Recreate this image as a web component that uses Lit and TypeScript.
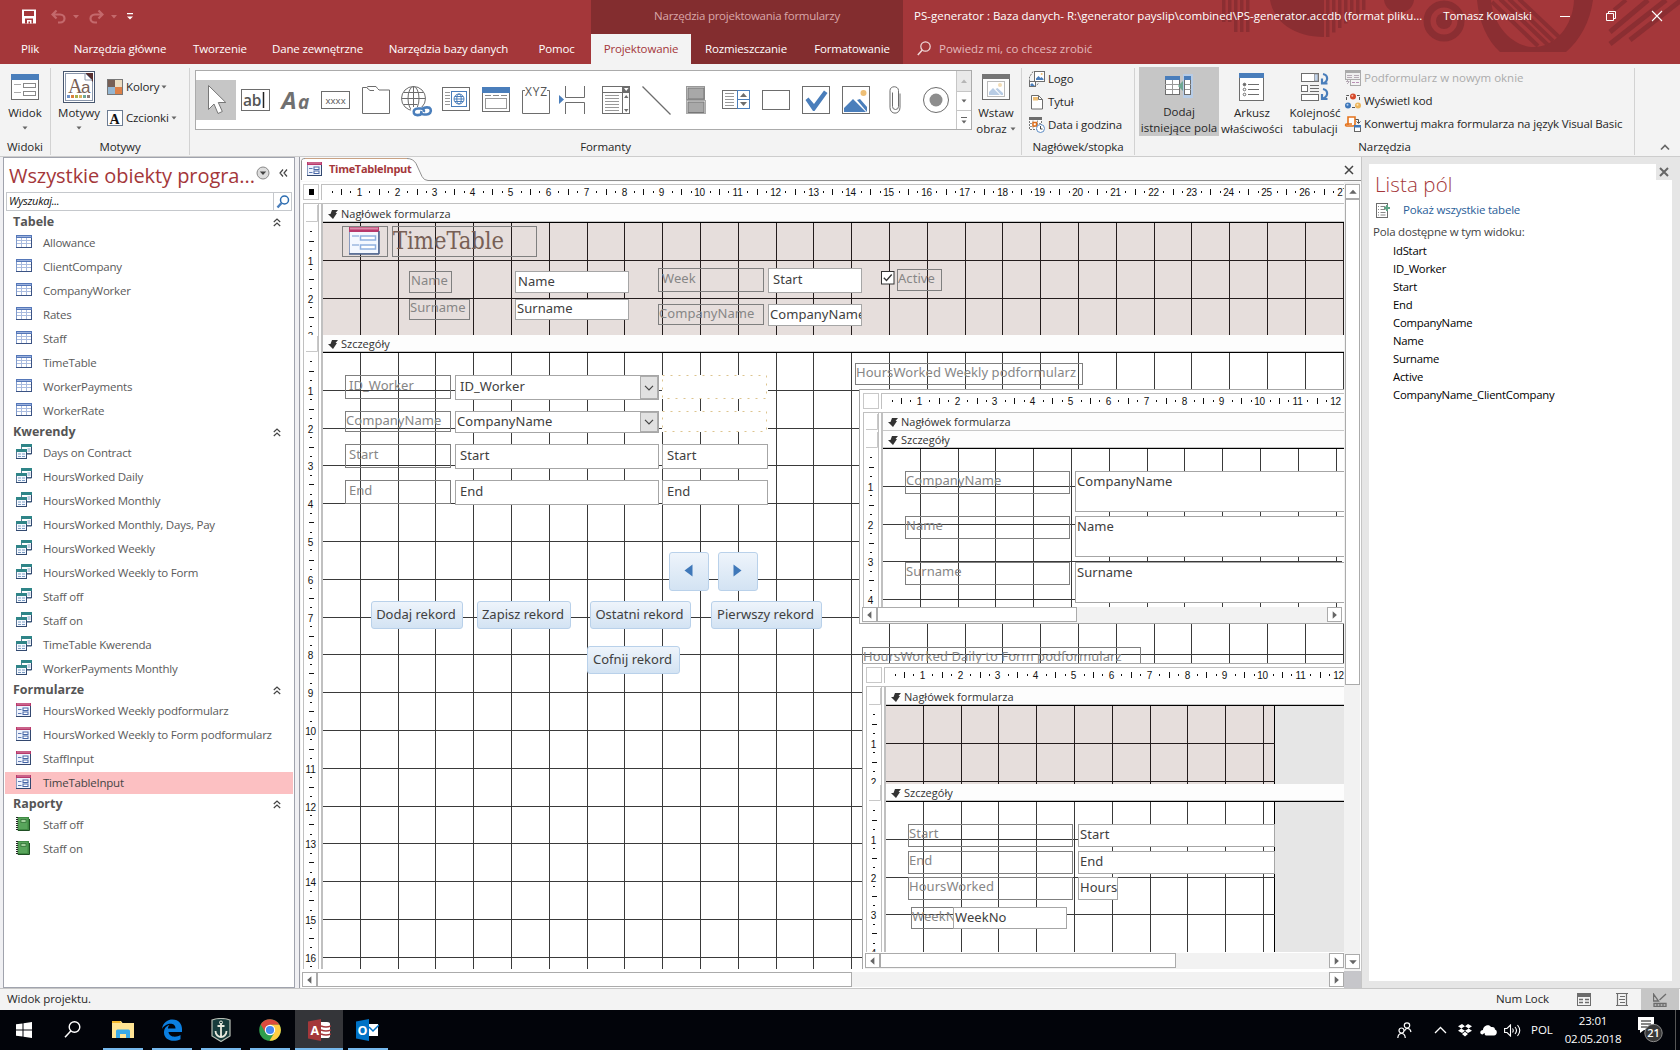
import { LitElement, html, svg, css, nothing } from "lit";
import { customElement } from "lit/decorators.js";

const CM = 37.8;
const B = "#4a7ebb";
const G = "#6d6d6d";

type Frag = unknown;

const icon = (w: number, h: number, body: Frag) =>
  html`<svg class="ic" width=${w} height=${h} viewBox="0 0 ${w} ${h}">${body}</svg>`;

/* ---------- rulers, grids and sections of a form designer ---------- */

const hRuler = (w: number) => {
  const out: Frag[] = [];
  for (let k = 1; k * (CM / 4) < w; k++) {
    const x = Math.floor(0.6 + (k * CM) / 4);
    if (k % 4 === 0) out.push(svg`<text x=${x - 0.5} y="11" text-anchor="middle">${k / 4}</text>`);
    else if (k % 2 === 0) out.push(svg`<rect x=${x} y="4" width="1" height="6"/>`);
    else out.push(svg`<rect x=${x} y="6" width="1" height="2"/>`);
  }
  return html`<svg class="ruler" width=${w} height="16">${out}</svg>`;
};

const vRuler = (bar: number, h: number) => {
  const out: Frag[] = [
    svg`<path d="M13.5 1V${bar - 1.5}H2" fill="none" stroke="#c8c8c8"/>`,
  ];
  for (let k = 1; k * (CM / 4) < h + 4; k++) {
    const y = Math.floor(bar - 0.5 + (k * CM) / 4);
    if (k % 4 === 0) out.push(svg`<text x="6.5" y=${y + 5} text-anchor="middle">${k / 4}</text>`);
    else if (k % 2 === 0) out.push(svg`<rect x="5" y=${y} width="5" height="1"/>`);
    else out.push(svg`<rect x="6" y=${y} width="2" height="1"/>`);
  }
  return html`<svg class="ruler vr" width="16" height=${bar + h}>${out}</svg>`;
};

const grid = (w: number, h: number, color: string) => {
  const out: Frag[] = [];
  for (let x = CM - 0.5; x < w; x += CM) out.push(svg`<rect x=${Math.floor(x)} y="0" width="1" height=${h}/>`);
  for (let y = CM - 0.5; y < h; y += CM) out.push(svg`<rect x="0" y=${Math.floor(y)} width=${w} height="1"/>`);
  return html`<svg class="gridlines" width=${w} height=${h} fill=${color}>${out}</svg>`;
};

interface SectionSpec {
  title: string;
  bar: number;
  h: number;
  pink?: boolean;
  gridW?: number;
  content?: Frag;
}

const section = (s: SectionSpec, w: number) => html`
  <div class="section">
    ${vRuler(s.bar, s.h)}
    <div class="secmain">
      <div class="bar ${s.h ? "" : "flat"}" style="height:${s.bar}px">
        <svg width="10" height="10" viewBox="0 0 10 10"><path d="M4 1h6L7.500 4H9L5 10 0 5h2.500z" fill="#333"/></svg>
        ${s.title}
      </div>
      ${s.h
        ? html`<div class="canvas ${s.gridW ? "short" : ""}" style="height:${s.h}px">
            <div class="paper ${s.pink ? "pink" : ""}" style="width:${s.gridW ?? w}px">
              ${grid(s.gridW ?? w, s.h, s.pink ? "#231c1c" : "#3a3a3a")}
            </div>
            ${s.content ?? nothing}
          </div>`
        : nothing}
    </div>
  </div>`;

const designer = (w: number, secs: SectionSpec[], main = false) => html`
  <div class="designer">
    <div class="rulerrow">
      <div class="corner">${main ? html`<i></i>` : nothing}</div>
      <div class="hr">${hRuler(w)}</div>
    </div>
    <div class="secs">${secs.map((s) => section(s, w))}</div>
  </div>`;

const arrowBtn = (dir: string) => {
  const d: Record<string, string> = {
    l: "M9.500 4v8L5 8z",
    r: "M5.500 4v8L10 8z",
    u: "M4 10h8L8 5.500z",
    d: "M4 6h8L8 10.500z",
  };
  return html`<div class="sbtn"><svg width="14" height="14" viewBox="0.500 0.500 15 15"><path d=${d[dir]} fill="#666"/></svg></div>`;
};

const hScroll = (thumb: number) => html`
  <div class="hscroll">${arrowBtn("l")}<div class="thumb" style="width:${thumb}px"></div><div class="grow"></div>${arrowBtn("r")}</div>`;

/* Controls on a canvas; the frame is measured in window coordinates. */
const placer = (ox: number, oy: number) => {
  const at = (x: number, y: number, r: number, b: number) =>
    `left:${x - ox}px;top:${y - oy}px;width:${r - x}px;height:${b - y}px`;
  return {
    at,
    label: (t: string, x: number, y: number, r: number, b: number, px = 1, cy = 9.5) =>
      html`<div class="ctl lab" style="${at(x, y, r, b)};padding-left:${px}px;line-height:${cy * 2 - 2}px">${t}</div>`,
    field: (t: string, x: number, y: number, r: number, b: number, px = 2, cy = 10.5) =>
      html`<div class="ctl fld" style="${at(x, y, r, b)};padding-left:${px}px;line-height:${cy * 2 - 2}px">${t}</div>`,
    combo: (t: string, x: number, y: number, r: number, b: number, px = 2, cy = 10.5) =>
      html`<div class="ctl fld combo" style="${at(x, y, r, b)};padding-left:${px}px;line-height:${cy * 2 - 2}px">
        ${t}<span class="drop"><svg width="10" height="6" viewBox="0 0 10 6"><path d="M1 0.800l4 4 4-4" fill="none" stroke="#444" stroke-width="1.200"/></svg></span>
      </div>`,
    button: (t: Frag, x: number, y: number, r: number, b: number) =>
      html`<div class="cmd" style=${at(x, y, r, b)}>${t}</div>`,
  };
};

/* ---------- navigation icons ---------- */

const tableIcon = icon(16, 14, svg`
  <rect x="0.500" y="0.500" width="15" height="12" fill="#fff" stroke="#7f9acb"/>
  <rect x="0" y="0" width="16" height="3" fill="#5577b8"/><path d="M1 1.500h14" stroke="#9db3de"/>
  <path d="M5.500 3v9M10.500 3v9M1 5.500h14M1 8.500h14" stroke="#a9bbdf"/>
  <path d="M0 12.500h16M15.500 3v10" stroke="#3b5384"/>`);

const queryIcon = icon(16, 15, svg`
  <rect x="5.500" y="0.500" width="10" height="9" fill="#fff" stroke="#5a7f95"/><rect x="5" y="0" width="11" height="3" fill="#2f8588"/>
  <path d="M11.500 5h3M11.500 7h3" stroke="#7b9cc4"/>
  <rect x="0.500" y="5.500" width="10" height="9" fill="#f5f9ff" stroke="#5a7394"/><rect x="0" y="5" width="11" height="3" fill="#2f8588"/>
  <path d="M2 10h3M6 10h3M2 12.500h3M6 12.500h3" stroke="#7b9cc4"/>
  <path d="M0 14.500h11M10.500 8v6M15.500 3v7H11" stroke="#324a70" fill="none"/>`);

const formIcon = (s = 1) => html`<svg class="ic" width=${15 * s} height=${14 * s} viewBox="0 0 15 14">
  <rect x="0.500" y="0.500" width="14" height="13" fill="#eef3fd" stroke="#8a9cc0"/>
  <rect x="0" y="0" width="15" height="3" fill="#b8396b"/><path d="M1 1h13" stroke="#dc8cab"/>
  <path d="M2 6.500h3.500M2 10.500h3.500" stroke="#5f7bb5"/>
  <rect x="7" y="5" width="5" height="2.500" fill="#fff" stroke="#4666a6"/><rect x="7" y="9" width="5" height="2.500" fill="#fff" stroke="#4666a6"/>
  <path d="M0 13.500h15M14.500 3v11" stroke="#33486f"/></svg>`;

const reportIcon = icon(14, 14, svg`
  <rect x="1.500" y="0" width="11.500" height="13.500" fill="#3f8a43"/><rect x="2.500" y="1" width="9" height="11" fill="#58a55b"/>
  <rect x="5" y="2.500" width="5" height="3" fill="#9fd09a" stroke="#2a6a2f" stroke-width="0.700"/>
  <path d="M1 0v14" stroke="#222" stroke-width="2" stroke-dasharray="1 1"/><path d="M2 13.500h11.500V2" stroke="#1f4f24" fill="none"/>`);

const NAV: { title: string; icon: Frag; items: string[] }[] = [
  { title: "Tabele", icon: tableIcon, items: ["Allowance", "ClientCompany", "CompanyWorker", "Rates", "Staff", "TimeTable", "WorkerPayments", "WorkerRate"] },
  { title: "Kwerendy", icon: queryIcon, items: ["Days on Contract", "HoursWorked Daily", "HoursWorked Monthly", "HoursWorked Monthly, Days, Pay", "HoursWorked Weekly", "HoursWorked Weekly to Form", "Staff off", "Staff on", "TimeTable Kwerenda", "WorkerPayments Monthly"] },
  { title: "Formularze", icon: formIcon(), items: ["HoursWorked Weekly podformularz", "HoursWorked Weekly to Form podformularz", "StaffInput", "TimeTableInput"] },
  { title: "Raporty", icon: reportIcon, items: ["Staff off", "Staff on"] },
];

const FIELDS = ["IdStart", "ID_Worker", "Start", "End", "CompanyName", "Name", "Surname", "Active", "CompanyName_ClientCompany"];

/* ---------- gallery icons, drawn in 40×40 cells ---------- */

const box = (x: number, y: number, w: number, h: number, f = "#fff", s = G) =>
  svg`<rect x=${x} y=${y} width=${w} height=${h} fill=${f} stroke=${s}/>`;

const GALLERY: Frag[] = [
  svg`<path d="M12.500 5.500v24l5.500-5.500 4 9.500 4.300-2-4-9h7.500z" fill="#fff" stroke="#777"/>`,
  svg`${box(5.5, 9.5, 28, 21)}<text x="7" y="25.500" font-size="15.500" font-weight="600" fill="#555">ab</text><path d="M27.500 12v16" stroke="#222" stroke-width="1.500"/>`,
  svg`<text x="5.500" y="29" font-size="24" font-style="italic" font-weight="700" fill="#707070">A</text><text x="22" y="29" font-size="19" font-style="italic" font-weight="700" fill="#707070">a</text>`,
  svg`${box(5.5, 11.5, 28, 17)}<text x="9.500" y="23.500" font-size="9.500" fill="#555" textLength="20">xxxx</text>`,
  svg`<path d="M6.500 33.500v-26h4l1.500-1h8l1.500 2 1.500 1.500h10.500v23.500zM10.500 7.500l3.500 3h4" fill="#fff" stroke=${G}/>`,
  svg`<g fill="#fff" stroke=${G}><circle cx="17.500" cy="18.500" r="12"/><ellipse cx="17.500" cy="18.500" rx="5.500" ry="12"/><path d="M17.500 6v25M5.500 18.500h24M7.500 12.500h20M7.500 24.500h14" fill="none"/></g>
    <rect x="15" y="27" width="22" height="9" fill="#fff"/>
    <g fill="none" stroke=${B} stroke-width="2.600"><path d="M26 33.500c-2 2-7 2.300-8 0-1.300-3 1-5 4-5h3c2 0 3.500 1.500 2.800 3.500"/><path d="M26.500 29c2-2 7-2.300 8 0 1.300 3-1 5.500-4 5.500h-2c-2 0-4-1.300-3-3.500"/></g>`,
  svg`${box(6.5, 7.5, 27, 23)}<path d="M9 12.500h5M9 15.500h5M9 18.500h5M9 21.500h5M9 24.500h5" stroke="#999"/>${box(15.5, 11.5, 15, 15, "#fff", B)}
    <g fill="none" stroke=${B}><circle cx="23" cy="19" r="5"/><ellipse cx="23" cy="19" rx="2.200" ry="5"/><path d="M18 19h10M19 16.500h8M19 21.500h8"/></g>`,
  svg`${box(6.5, 9.5, 27, 22)}<rect x="6" y="7" width="28" height="6" fill=${B}/><path d="M9 15.500h6M17 15.500h6M25 15.500h6" stroke="#888"/>${box(9.5, 18.5, 21, 10, "#fff", "#999")}`,
  svg`<path d="M9 10.500H6.500v23h27v-23H31" fill="none" stroke=${G}/><text x="9" y="15.500" font-size="12" font-weight="500" fill="#555" textLength="22">XYZ</text>`,
  svg`<path d="M9.500 6v11.500h19V6M9.500 34V22.500h19V34" fill="none" stroke=${G}/><path d="M3 15l5 4.500-5 4.500z" fill=${B}/>`,
  svg`${box(6.5, 6.5, 27, 27)}<path d="M6 12.500h28" stroke=${G}/><path d="M26.500 6v28" stroke=${G}/><rect x="26" y="6" width="8" height="6" fill=${G}/><path d="M28 8h4.500l-2.300 3z" fill="#fff"/>
    <path d="M9 15.500h14M9 18.500h14M9 21.500h14M9 24.500h14M9 27.500h14M9 30.500h14" stroke="#999"/><path d="M28 18h4.500l-2.300-3zM28 29h4.500l-2.300 3z" fill=${G}/>`,
  svg`<path d="M6.500 6.500l28 28" stroke=${G} stroke-width="1.200"/>`,
  svg`<rect x="10.500" y="6.500" width="18" height="13" fill="#eee" stroke="#999"/><rect x="12" y="8" width="16" height="11" fill="#a8a8a8" stroke="#777"/><rect x="10.500" y="20.500" width="19" height="13" fill="#f0f0f0" stroke="#aaa"/><rect x="12" y="22" width="16" height="10.500" fill="#a8a8a8" stroke="#777"/>`,
  svg`${box(6.5, 10.5, 27, 18)}<path d="M9 13.500h9M9 16.500h9M9 19.500h9M9 22.500h9M9 25.500h9" stroke="#999"/>${box(21.5, 10.5, 12, 18, "#fff", B)}<path d="M21 19.500h13" stroke=${B}/><path d="M24 17h7l-3.500-4zM24 22h7l-3.500 4z" fill=${G}/>`,
  svg`${box(6.5, 10.5, 27, 19)}`,
  svg`${box(6.5, 6.5, 27, 27)}<path d="M9.500 20l3-2.500 5.500 6.500L28 10.500l3.500 2.500L18.500 31h-1.500z" fill=${B}/>`,
  svg`${box(6.5, 6.5, 27, 27)}<path d="M8 32V28l9-9 13 13zM21 20l3-1 7 8v5z" fill=${B}/><circle cx="27.500" cy="13" r="3" fill="#eebf76"/>`,
  svg`<path d="M16.500 12v14a2.500 2.500 0 0 0 6 0V10c0-5-8.500-5-8.500 0v17c0 7.500 10 7.500 10 0V13" transform="translate(0 .5)" fill="none" stroke=${G}/>`,
  svg`<circle cx="20" cy="20" r="12.500" fill="#fff" stroke=${G}/><circle cx="20" cy="20" r="6.500" fill="#8d8d8d"/>`,
];

const caret = html`<svg width="6" height="4" viewBox="0 0 6 4"><path d="M0.500 0.500h5L3 3.500z" fill="#666"/></svg>`;

const logoIcon = icon(16, 16, svg`<path d="M4 0.500L0.500 6v9.500H6L10 12" fill="none" stroke="#777" stroke-dasharray="2 1"/>${box(5.5, 0.5, 10, 10)}<path d="M7 9V7.500L9.500 5l2 2 1-1 2 2v1z" fill=${B}/><circle cx="12.700" cy="3" r="1" fill="#eebf76"/>${box(0.5, 10.5, 6, 5)}<path d="M1.500 15v-1.500L3 12l3 3z" fill=${B}/>`);
const titleIcon = icon(16, 16, svg`<path d="M2.500 1.500h7l4 4v9.500h-11z" fill="#fff" stroke=${G}/><path d="M9.500 1.500v4h4" fill="none" stroke=${G}/><rect x="4" y="3" width="5" height="3.500" fill="#eebf76"/>`);
const dateIcon = icon(16, 16, svg`<rect x="0.500" y="1" width="12" height="11.500" fill="#fff" stroke="#777" stroke-dasharray="2 1"/><rect x="0" y="0" width="13" height="3" fill=${G}/><path d="M4 3.500v9M8.500 3.500v9M1 6.500h11M1 9.500h11" stroke="#999" stroke-dasharray="2 1"/><rect x="4" y="5.500" width="3.500" height="3.500" fill="#fff" stroke="#e0701e" stroke-width="1.500"/><circle cx="11.500" cy="11.500" r="4" fill="#fff" stroke="#5d8cc4"/><path d="M11.500 9v3h2" fill="none" stroke="#444"/>`);
const subIcon = icon(16, 16, svg`<rect x="0.500" y="0.500" width="15" height="9" fill="#eee" stroke="#aaa"/><rect x="0" y="0" width="16" height="3" fill="#aaa"/><path d="M2 5.500h5M9 5.500h5M2 7.500h5M9 7.500h5M1 11.500h3.500M2 10l2 2-2 2" stroke="#b5aab5" fill="none"/><rect x="5.500" y="9.500" width="10" height="6" fill="#f3f3f3" stroke="#aaa"/><path d="M7 12.500h3M11 12.500h3" stroke="#b98fb5"/>`);
const codeIcon = icon(16, 16, svg`<path d="M4 2.500H1.500V8M12 2.500h2.500V8M7 14.500h3" fill="none" stroke="#555" stroke-dasharray="3 1"/><circle cx="8" cy="3.500" r="3" fill="#d6492a"/><circle cx="7.300" cy="2.800" r="1" fill="#f4b9a8"/><circle cx="3" cy="12.500" r="3" fill="#3f78bb"/><circle cx="2.500" cy="11.700" r="1" fill="#b7d2f0"/><circle cx="13" cy="12.500" r="3" fill="#ecb55c"/><circle cx="12.500" cy="11.700" r="1" fill="#fbe6bf"/>`);
const macroIcon = icon(16, 16, svg`<path d="M3 9V1h7v7c0 1.500-1 2-2 2H1.500C0 10 0.500 7.500 2 8h5" fill="#fff" stroke="#e5731c" stroke-width="1.600"/><path d="M10.500 3.500h3V7M11.500 5.500l2 2 2-2" fill="none" stroke="#555"/><rect x="9.500" y="9.500" width="6" height="6" fill="#fff" stroke="#666"/><rect x="9" y="9" width="7" height="2.500" fill="#3f78bb"/>`);

@customElement("app-root")
export class AppRoot extends LitElement {
  static styles = css`
    :host { display: flex; flex-direction: column; width: 1680px; height: 1050px; overflow: hidden; background: #e6e6e6; color: #262626; font-family: "Open Sans", "Noto Sans", sans-serif; font-size: 11.5px; letter-spacing: -0.15px; line-height: 16px; }
    * { box-sizing: border-box; }
    svg { display: block; flex: none; }
    .ic { overflow: visible; }
    .grow { flex: 1; }
    .row { display: flex; align-items: center; }

    /* title bar and tabs */
    .top { position: relative; height: 64px; flex: none; background: #a4373a; color: #fff; display: grid; grid-template-rows: 34px 30px; }
    .art { position: absolute; right: 0; top: 0; }
    .titlebar { position: relative; display: grid; grid-template-columns: 591px 312px 529px 111px 137px; align-items: center; padding-bottom: 2px; }
    .qat { display: flex; align-items: center; height: 32px; padding-left: 22px; padding-top: 1px; }
    .qat svg { margin-right: 7px; }
    .qat .g1 { margin-left: 8px; } .qat .g2 { margin-left: 3px; } .qat .g3 { margin-left: 0; }
    .ctx { background: #832d2f; height: 34px; margin-bottom: -2px; text-align: center; line-height: 32px; color: #d9a7a8; letter-spacing: -0.25px; }
    .doc { padding-left: 11px; white-space: nowrap; letter-spacing: 0; }
    .user { text-align: center; }
    .wbtns { display: flex; align-items: center; padding-left: 15px; gap: 32px; }
    .tabs { position: relative; display: grid; grid-template-columns: 60px 120px 80px 115px 147px 69px 100px 110px 102px 1fr; text-align: center; line-height: 29px; }
    .tabs .c { background: #832d2f; }
    .tabs .on { background: #f3f3f3; color: #a4373a; }
    .tell { display: flex; align-items: center; gap: 8px; padding-left: 14px; color: #e3b9ba; letter-spacing: 0; line-height: 28px; }
    .tell svg { margin-top: -2px; }

    /* ribbon */
    .ribbon { height: 93px; flex: none; background: #f3f3f3; border-bottom: 1px solid #cdcdcd; display: grid; grid-template-columns: 51px 139px 832px 113px 500px 45px; }
    .group { display: flex; flex-direction: column; margin: 4px 0 4px; border-right: 1px solid #d2d2d2; }
    .group.last { border: 0; align-items: center; justify-content: flex-end; padding: 0 0 4px 15px; }
    .gbody { flex: 1; display: flex; padding-top: 1px; min-height: 0; }
    .gname { text-align: center; height: 16px; line-height: 16px; letter-spacing: -0.1px; }
    .big { display: flex; flex-direction: column; align-items: center; text-align: center; white-space: nowrap; height: 70px; font-size: 11.5px; }
    .big .pic { height: 36px; display: flex; align-items: center; justify-content: center; }
    .big .cap { line-height: 16px; letter-spacing: 0; }
    .big .dn { height: 14px; display: flex; align-items: center; }
    .big.dark { background: #c6c6c6; width: 80px; margin: -2px 0 0 4px; padding-top: 2px; height: 69px; }
    .big.dark .pic { height: 37px; padding-bottom: 1px; }
    .w50 { width: 50px; } .w56 { width: 56px; } .w66 { width: 66px; } .w57 { width: 60px; } .w48 { width: 48px; }
    .list { display: flex; flex-direction: column; gap: 7px; white-space: nowrap; padding-top: 1px; }
    .list.hf { padding: 2px 0 0 7px; }
    .list .row { gap: 3px; height: 16px; }
    .list .off { color: #ababab; letter-spacing: -0.02px; }
    .list.colors { padding: 10px 0 0; gap: 15px; }
    .colors .row svg:last-child { margin-left: -1px; }
    .gallery { display: flex; width: 777px; height: 60px; margin: 1px 0 0 5px; border: 1px solid #ababab; background: #fff; }
    .cells { display: flex; padding-top: 9px; width: 761px; }
    .cells svg { font-family: "Open Sans", sans-serif; }
    .cells .sel { background: #c6c6c6; }
    .gscroll { width: 15px; display: grid; grid-template-rows: 21px 19px 1fr; border-left: 1px solid #c6c6c6; }
    .gscroll div { display: flex; align-items: center; justify-content: center; border-bottom: 1px solid #c6c6c6; }
    .gscroll div:last-child { border: 0; flex-direction: column; gap: 2px; }
    .gscroll .dis { background: #e9e9e9; }
    .line { width: 6px; height: 1px; background: #666; }

    /* work area */
    .work { flex: 1; display: grid; grid-template-columns: 301px 1061px 318px; min-height: 0; }
    .navwrap { display: flex; padding-left: 3px; background: #f0f0f3; border-right: 1px solid #f7f7f7; }
    .nav { width: 292px; background: #fff; border: 1px solid #a0a3ad; display: flex; flex-direction: column; }
    .navgap { width: 5px; border-right: 1px solid #9a9ca6; background: #f0f0f3; }
    .nhead { height: 34px; display: flex; align-items: center; padding: 2px 0 0 5px; color: #a4373a; font-size: 20px; letter-spacing: -0.07px; white-space: nowrap; }
    .nhead .t { width: 251px; }
    .nhead svg { margin: -7px 8px 0 1px; }
    .nsearch { display: flex; height: 19px; margin: 0 0 2px 2px; width: 286px; border: 1px solid #c5c8cc; font-style: italic; font-size: 11px; color: #111; line-height: 16px; padding-left: 2px; letter-spacing: -0.25px; }
    .nsearch .sb { margin-left: auto; width: 18px; border-left: 1px solid #c5c8cc; display: flex; align-items: center; justify-content: center; }
    .ngroup { height: 18px; display: flex; align-items: center; justify-content: space-between; padding: 0 13px 0 9px; font-weight: 700; font-size: 12.5px; color: #555; letter-spacing: -0.02px; }
    .nitem { height: 24px; display: flex; align-items: center; padding-left: 12px; color: #5a5a5a; font-size: 11.5px; letter-spacing: -0.22px; white-space: nowrap; }
    .nitem .hold { width: 27px; margin-top: -3px; }
    .nitem.sel { height: 22px; margin: 1px 1px; padding-left: 11px; background: #fcc0c2; color: #444; }

    .docarea { display: flex; flex-direction: column; border-right: 1px solid #c5c5c5; background: #f8f8f8; height: 831px; overflow: hidden; }
    .dtabs { height: 25px; flex: none; position: relative; display: flex; align-items: center; justify-content: space-between; padding: 0 7px 0 6px; }
    .dtabs .tabshape { position: absolute; left: 0; top: 0; }
    .dtab { position: relative; display: flex; align-items: center; gap: 7px; color: #a4373a; font-weight: 700; font-size: 11px; letter-spacing: -0.3px; padding-bottom: 2px; }
    .body { flex: 1; display: grid; grid-template-columns: 1043px 17px; grid-template-rows: 789px 17px; background: #fff; min-height: 0; }
    .mainform { padding: 2px 0 0 2px; overflow: hidden; }
    .designer { display: flex; flex-direction: column; }
    .rulerrow { height: 19px; display: flex; flex: none; gap: 2px; }
    .corner { width: 16px; height: 16px; border: 1px solid #c8c8c8; display: flex; align-items: center; justify-content: center; }
    .corner i { width: 5px; height: 6px; background: #000; }
    .hr { flex: 1; height: 16px; border-top: 1px solid #c0c0c0; border-left: 1px solid #c0c0c0; overflow: hidden; }
    .ruler { font: 10px "Liberation Sans", sans-serif; letter-spacing: -0.3px; overflow: hidden; fill: #111; }
    .secs { display: flex; flex-direction: column; }
    .section { display: flex; overflow: hidden; }
    .secs .section:first-child { border-top: 1px solid #c0c0c0; }
    .secs .section:first-child .bar { padding-top: 1px; }
    .vr { border: 0 solid #c0c0c0; border-width: 0 1px; margin-right: 2px; }
    .secmain { flex: 1; min-width: 0; border-left: 2px solid #c0c0c0; }
    .bar { display: flex; align-items: center; gap: 3px; padding: 0 0 0 5px; background: #fdfdfd; border-bottom: 1px solid #000; box-shadow: inset 0 -1px #c8c8c8; font-size: 11px; letter-spacing: 0; color: #333; white-space: nowrap; }
    .bar.flat { border-bottom-color: #c8c8c8; box-shadow: none; }
    .canvas { position: relative; overflow: hidden; background: #fff; }
    .canvas.short { background: #e6e6e6; }
    .paper { height: 100%; }
    .short .paper { border-right: 1px solid #000; background: #fff; }
    .paper.pink, .short .paper.pink { background: #e6dedc; }
    .ctl { position: absolute; overflow: hidden; white-space: nowrap; font-family: "Noto Sans", "Open Sans", sans-serif; font-size: 13px; letter-spacing: 0.05px; }
    .lab { border: 1px solid #7f7f7f; color: #868686; }
    .fld { border: 1px solid #a6a6a6; background: #fff; color: #404040; }
    .drop { position: absolute; right: 0; top: 0; bottom: 0; width: 18px; background: #e1e1e1; border: 1px solid #adadad; display: flex; align-items: center; justify-content: center; }
    .ghost { position: absolute; }
    .big-title { font-family: "DejaVu Serif Condensed", "DejaVu Serif", serif; font-stretch: condensed; font-size: 23.5px; color: #775f55; letter-spacing: 0; }
    .cmd { position: absolute; display: flex; align-items: center; justify-content: center; border: 1px solid #b9d1ea; border-radius: 3px; background: linear-gradient(#eef4fb, #d3e3f3); color: #404040; font-family: "Noto Sans", sans-serif; font-size: 13px; letter-spacing: 0; white-space: nowrap; padding: 0 2px 3px 0; }
    .sub { position: absolute; background: #fff; border: 1px solid #a6a6a6; border-right: 0; overflow: hidden; padding: 3px 0 0 3px; }
    .sub.two { border-bottom: 0; }
    .sub .hscroll { margin-left: -1px; }
    .sub.one .hscroll { margin-right: 2px; }
    .sub.two .hscroll { margin-top: 1px; }
    .hscroll { display: flex; height: 16px; background: #f2f2f2; }
    .body > .hscroll { margin: 1px 0 0 1px; height: 15px; }
    .sbtn { width: 15px; height: 15px; border: 1px solid #ababab; background: #fff; display: flex; align-items: center; justify-content: center; flex: none; }
    .thumb { height: 15px; border: 1px solid #ababab; background: #fff; flex: none; }
    .vscroll { display: flex; flex-direction: column; padding: 2px 0 2px 1px; width: 16px; background: #f2f2f2; }
    .vscroll .thumb { width: 15px; height: 486px; }
    .size { background: #c6c6ca; }

    .side { padding: 7px 0 0 7px; background: #e6e6e6; }
    .panel { width: 303px; height: 817px; background: #fff; position: relative; padding: 6px 0 0 4px; }
    .px { position: absolute; right: 0; top: 0; width: 16px; height: 16px; background: #e6e6e6; display: flex; align-items: center; justify-content: center; }
    .ptitle { font-size: 20.5px; font-weight: 300; color: #a4373a; line-height: 28px; padding-left: 2px; letter-spacing: 0.1px; }
    .plink { display: flex; align-items: center; gap: 13px; color: #2a6099; height: 24px; padding-left: 3px; letter-spacing: -0.2px; }
    .pcap { height: 20px; line-height: 20px; color: #444; letter-spacing: -0.2px; }
    .pf { height: 18px; line-height: 18px; padding-left: 20px; color: #000; font-size: 11.3px; letter-spacing: -0.22px; }

    .status { height: 22px; flex: none; border-top: 1px solid #c6c6c6; background: #f3f3f3; display: flex; align-items: center; padding-left: 7px; padding-bottom: 1px; letter-spacing: -0.05px; }
    .status .nl { width: 81px; letter-spacing: -0.1px; }
    .status .v2 { margin: 0 12px 0 25px; }
    .status .cur { width: 38px; height: 21px; background: #c6c6c6; display: flex; align-items: center; justify-content: center; margin: 0 1px -1px 0; }
    .taskbar { height: 40px; flex: none; background: #02040a; display: flex; color: #fff; }
    .tk { width: 49px; height: 40px; display: flex; align-items: center; justify-content: center; border-bottom: 2px solid transparent; padding-top: 1px; }
    .tk.first { width: 48px; }
    .run { width: 40px; margin: 0 4.500px; border-bottom-color: #76b9ed; }
    .tk.act { width: 48px; background: #343539; border-bottom-color: #76b9ed; margin-left: 0.500px; }
    .tray { display: flex; align-items: center; margin-left: auto; width: 283px; }
    .tray .pol { width: 44px; margin-left: 10px; font-size: 11.5px; letter-spacing: 0; }
    .clock { width: 62px; margin-left: -13px; text-align: center; line-height: 18px; letter-spacing: -0.2px; font-size: 11.5px; }
    .note { margin-left: 14px; }
    .desk { width: 1px; height: 40px; background: #555; margin: 0 4px 0 auto; }
  `;

  private art() {
    const c = "#8b2e32";
    const bars = [0, 6, 12, 18, 24].map((d, i) => svg`<rect x=${22 + d} y="0" width="3.500" height=${i < 2 ? 22 : 32} fill=${c}/>`);
    const stripes = [0, 6, 12, 18, 24, 30, 36].map((d) => svg`<rect x=${126 + d} y="0" width="3.500" height=${37 - d * 0.75} fill=${c}/>`);
    return html`<svg class="art" width="480" height="64" viewBox="0 0 480 64">
      ${bars}
      <path d="M70 0h54v37c-30 0-50-15-54-37z" fill=${c}/>${stripes}
      <path d="M184 0h30c-2 17-28 17-30 0z" fill=${c}/>
      <circle cx="244" cy="21" r="17" fill="none" stroke=${c} stroke-width="7"/><circle cx="244" cy="21" r="8" fill=${c}/>
      <path d="M277 0c2 22 10 40 23 52h66c14-12 24-30 27-52h-19c-1 26-19 47-40 47S293 26 291 0z" fill=${c}/>
      <g stroke=${c} stroke-width="4"><path d="M292 2l46 44M300-1l48 46M309-1l44 42M319-1l40 38"/></g>
      <g stroke=${c} stroke-width="5"><path d="M448 0l-38 32M466 0l-56 44M484-2l-54 42"/></g>
      <path d="M426 0l-12 10" stroke=${c} stroke-width="4"/>
    </svg>`;
  }

  private top() {
    const dd = html`<svg width="6" height="4" viewBox="0 0 6 4"><path d="M0 0h6L3 3.500z" fill="#c4696c"/></svg>`;
    return html`<div class="top">
      ${this.art()}
      <div class="titlebar">
        <div class="qat">
          <svg width="14" height="15" viewBox="0 0 14 15"><path d="M0 0.500h14v14H0z" fill="#fff"/><path d="M2 2h10v5H2zM3 9.500h8v5H3z" fill="#a4373a"/><path d="M5 11h4.500v3.500H8v-2H6.500v2H5z" fill="#fff"/></svg>
          <svg class="g1" width="15" height="14" viewBox="0 0 15 14"><path d="M5.500 0.500L1.500 4.500l4 4M2 4.500h7c6 0 6 8 0 8H7" fill="none" stroke="#c4696c" stroke-width="2.200"/></svg>
          ${dd}
          <svg class="g2" width="15" height="14" viewBox="0 0 15 14"><path d="M9.500 0.500l4 4-4 4M13 4.500H6c-6 0-6 8 0 8h2" fill="none" stroke="#c4696c" stroke-width="2.200"/></svg>
          ${dd}
          <svg class="g3" width="14" height="7" viewBox="-6 0 14 7"><path d="M-3 0h6v1.300h-6zM-3 3.500h6l-3 3z" fill="#fff"/></svg>
        </div>
        <div class="ctx">Narzędzia projektowania formularzy</div>
        <div class="doc">PS-generator : Baza danych- R:\\generator payslip\\combined\\PS-generator.accdb (format pliku...</div>
        <div class="user">Tomasz Kowalski</div>
        <div class="wbtns">
          <svg width="14" height="12"><path d="M2 6.500h10" stroke="#fff"/></svg>
          <svg width="14" height="12"><path d="M2.500 3.500h7v7h-7zM4.500 3V1.500h7v7H10" stroke="#fff" fill="none"/></svg>
          <svg width="14" height="12"><path d="M2 1l10 10M12 1L2 11" stroke="#fff" stroke-width="1.100"/></svg>
        </div>
      </div>
      <div class="tabs">
        <div>Plik</div><div>Narzędzia główne</div><div>Tworzenie</div><div>Dane zewnętrzne</div><div>Narzędzia bazy danych</div><div>Pomoc</div>
        <div class="on">Projektowanie</div><div class="c">Rozmieszczanie</div><div class="c">Formatowanie</div>
        <div class="tell"><svg width="14" height="15" viewBox="0 0 14 15"><circle cx="8.500" cy="5.500" r="4.700" fill="none" stroke="#f0d8d8" stroke-width="1.200"/><path d="M5.300 9L0.800 14" stroke="#f0d8d8" stroke-width="1.500"/></svg>Powiedz mi, co chcesz zrobić</div>
      </div>
    </div>`;
  }

  private ribbon() {
    return html`<div class="ribbon">
      <div class="group"><div class="gbody">
        <div class="big w50"><div class="pic">${icon(28, 26, svg`${box(0.5, 0.5, 27, 25)}<rect width="28" height="6" fill=${B}/><path d="M3 10.500h7M3 18.500h7" stroke="#aaa"/>${box(12.5, 9.5, 12, 4, "#fff", "#888")}${box(12.5, 17.5, 12, 4, "#fff", "#888")}`)}</div><div class="cap">Widok</div><div class="dn">${caret}</div></div>
      </div><div class="gname">Widoki</div></div>

      <div class="group"><div class="gbody">
        <div class="big w56"><div class="pic">${icon(32, 33, svg`${box(0.5, 0.5, 31, 31, "#fff", "#47566e")}${box(2.5, 2.5, 27, 27, "#fff", "#8b97ab")}<path d="M22 2h8v9z" fill="#562f2f"/><path d="M22 2v7h7z" fill="#fff" stroke="#8b97ab"/><text x="5" y="21.500" font-size="20" font-family="Liberation Serif" fill="#775f55">A</text><text x="18" y="21.500" font-size="17" font-family="Liberation Sans" fill="#775f55">a</text>
          <g transform="translate(0 -1)"><rect x="4" y="25" width="3" height="3" fill="#6f93c9"/><rect x="8" y="25" width="3" height="3" fill="#dd7e3b"/><rect x="12" y="25" width="3" height="3" fill="#a9b04e"/><rect x="16" y="25" width="3" height="3" fill="#d8b25c"/><rect x="20" y="25" width="3" height="3" fill="#6ea898"/><rect x="24" y="25" width="3" height="3" fill="#8e7b74"/></g>`)}</div><div class="cap">Motywy</div><div class="dn">${caret}</div></div>
        <div class="list colors">
          <div class="row">${icon(16, 16, svg`<rect width="16" height="16" fill="#777"/><rect x="1" y="1" width="7" height="7" fill="#775f55"/><rect x="8" y="1" width="7" height="7" fill="#ebddc3"/><rect x="1" y="8" width="7" height="7" fill="#94b6d2"/><rect x="8" y="8" width="7" height="7" fill="#dd8047"/>`)}<span>Kolory</span>${caret}</div>
          <div class="row">${icon(16, 16, svg`${box(0.5, 0.5, 15, 15, "#fff", "#6d7d93")}<text x="2.500" y="13.500" font-size="14" font-weight="700" font-family="Liberation Serif" fill="#111">A</text>`)}<span>Czcionki</span>${caret}</div>
        </div>
      </div><div class="gname">Motywy</div></div>

      <div class="group"><div class="gbody">
        <div class="gallery">
          <div class="cells">${GALLERY.map((g, i) => html`<svg class=${i ? "" : "sel"} width="40" height="40" viewBox="0 0 40 40">${g}</svg>`)}</div>
          <div class="gscroll">
            <div class="dis"><svg width="6" height="4"><path d="M0 4h6L3 0.500z" fill="#b5b5b5"/></svg></div>
            <div>${caret}</div>
            <div><span class="line"></span>${caret}</div>
          </div>
        </div>
        <div class="big w48"><div class="pic">${icon(28, 26, svg`${box(0.5, 0.5, 27, 25, "#fdfdfd")}<rect width="28" height="5" fill="#757575"/>${box(5.5, 7.5, 17, 15, "#fff", "#bbb")}<path d="M7 21v-3l4-4 7 7zM13.500 15l2-1 5.500 5v2h-2z" fill="#b8cce4"/><circle cx="18" cy="11" r="2" fill="#f3dcb4"/>`)}</div><div class="cap">Wstaw</div><div class="cap row">obraz&nbsp;${caret}</div></div>
      </div><div class="gname">Formanty</div></div>

      <div class="group"><div class="gbody"><div class="list hf">
        <div class="row">${logoIcon}<span>Logo</span></div><div class="row">${titleIcon}<span>Tytuł</span></div><div class="row">${dateIcon}<span>Data i godzina</span></div>
      </div></div><div class="gname">Nagłówek/stopka</div></div>

      <div class="group"><div class="gbody">
        <div class="big dark"><div class="pic">${icon(28, 24, svg`<rect x="18" y="0" width="10" height="24" fill="#b7cce6"/>${box(0.5, 2.5, 14, 18)}${box(19.5, 2.5, 6, 18)}<rect x="0" y="2" width="15" height="4" fill=${B}/><rect x="19" y="2" width="7" height="4" fill=${B}/><path d="M7.500 6v14M0 10.500h14M0 15.500h14M20 10.500h6M20 15.500h6" stroke="#999"/><path d="M18 7v10l-5-5z" fill="#6fa792"/>`)}</div><div class="cap">Dodaj<br>istniejące pola</div></div>
        <div class="big w66"><div class="pic">${icon(26, 28, svg`${box(0.5, 0.5, 24, 27)}<rect width="25" height="5" fill=${B}/><g fill="none" stroke=${G}><circle cx="5.500" cy="11.500" r="1.300" fill="#666"/><circle cx="5.500" cy="16.500" r="1.300"/><circle cx="5.500" cy="21.500" r="1.300"/><path d="M9 11.500h11M9 16.500h11M9 21.500h11"/></g>`)}</div><div class="cap">Arkusz<br>właściwości</div></div>
        <div class="big w57"><div class="pic">${icon(28, 28, svg`${box(0.5, 0.5, 17, 8)}<rect x="13.500" y="1" width="3.500" height="7" fill="#bfd2ea" stroke="#888" stroke-width="0.700"/>${box(0.5, 12.5, 6, 6)}<path d="M9 12.500h9M9 15.500h9M9 18.500h9" stroke=${G}/>${box(0.5, 21.5, 17, 6)}<g fill="none" stroke=${B} stroke-width="2.200"><path d="M22 1c5 1 6 7 0 9.500M26.500 10.500h-5.500v-5M22 16c5 1 6 7 0 9.500M26.500 26h-5.500v-5"/></g>`)}</div><div class="cap">Kolejność<br>tabulacji</div></div>
        <div class="list">
          <div class="row off">${subIcon}<span>Podformularz w nowym oknie</span></div><div class="row">${codeIcon}<span>Wyświetl kod</span></div><div class="row">${macroIcon}<span>Konwertuj makra formularza na język Visual Basic</span></div>
        </div>
      </div><div class="gname">Narzędzia</div></div>
      <div class="group last"><svg width="10" height="7" viewBox="0 0 10 7"><path d="M1 5.500l4-4 4 4" fill="none" stroke="#666" stroke-width="1.700"/></svg></div>
    </div>`;
  }

  private nav() {
    return html`<div class="navwrap"><div class="nav">
      <div class="nhead"><span class="t">Wszystkie obiekty progra...</span>
        <svg width="14" height="14" viewBox="0 0 14 14"><circle cx="7" cy="7" r="6" fill="#ddd" stroke="#888"/><path d="M3.800 5.500h6.400L7 9z" fill="#444"/></svg>
        <svg width="9" height="8" viewBox="0 0 9 8"><path d="M4 0.500L1 4l3 3.500M8 0.500L5 4l3 3.500" fill="none" stroke="#444" stroke-width="1.200"/></svg>
      </div>
      <div class="nsearch">Wyszukaj...<span class="sb"><svg width="14" height="14" viewBox="0 0 14 14"><circle cx="8.500" cy="5" r="4" fill="none" stroke="#2b6cb0" stroke-width="1.500"/><path d="M5.500 8L1.500 12.500" stroke="#4a7ebb" stroke-width="2.400"/></svg></span></div>
      ${NAV.map((g) => html`
        <div class="ngroup">${g.title}<svg width="8" height="9" viewBox="0 0 8 9"><path d="M0.800 4L4 1l3.200 3M0.800 8L4 5l3.200 3" fill="none" stroke="#444" stroke-width="1.200"/></svg></div>
        ${g.items.map((t) => html`<div class="nitem ${t === "TimeTableInput" ? "sel" : ""}"><span class="hold">${g.icon}</span>${t}</div>`)}`)}
    </div><div class="navgap"></div></div>`;
  }

  private header() {
    const p = placer(323, 223);
    return html`
      <div class="ctl lab" style=${p.at(342, 226, 388, 257)}></div>
      <svg class="ctl" style=${p.at(349, 227, 380, 255)} viewBox="0 0 31 28"><rect x="0.500" y="0.500" width="29" height="26" fill="#f4f8ff" stroke="#8a9cc0"/><rect width="30" height="5" fill="#b8396b"/><path d="M1 1.500h28" stroke="#dc8cab" stroke-width="2"/><g fill="#fff" stroke="#8fb0e0" stroke-width="1.500"><rect x="11.500" y="9" width="15" height="4"/><rect x="11.500" y="18" width="15" height="4"/></g><path d="M3 9h7M3 18h7" stroke="#9db8e0" stroke-width="1.500"/><path d="M0 27h30M30 4v23" stroke="#4f648c" stroke-width="1.500"/></svg>
      <div class="ctl lab big-title" style="${p.at(392, 226, 537, 257)};line-height:29px">TimeTable</div>
      ${p.label("Name", 409, 271, 452, 293)}${p.label("Surname", 409, 299, 470, 320, 0, 8.5)}
      ${p.field("Name", 515, 271, 629, 293)}${p.field("Surname", 515, 299, 629, 320, 1, 9.5)}
      ${p.label("Week", 658, 268, 764, 292, 3, 10)}${p.field("Start", 768, 268, 862, 293, 4, 11.5)}
      ${p.label("CompanyName", 658, 304, 764, 325, 0)}${p.field("CompanyName", 768, 304, 862, 326, 1)}
      <svg class="ctl" style=${p.at(881, 271, 895, 285)} viewBox="0 0 14 14"><rect x="0.500" y="0.500" width="12.500" height="12.500" fill="#fff" stroke="#333"/><path d="M2.800 6.800l2.700 2.700 5.200-6" fill="none" stroke="#333" stroke-width="1.300"/></svg>
      ${p.label("Active", 897, 269, 942, 291, 0)}`;
  }

  private subWeekly() {
    const p = placer(883, 449);
    const rows: [string, number, number][] = [["CompanyName", 471, 512], ["Name", 516, 557], ["Surname", 562, 603]];
    return html`${designer(459, [
      { title: "Nagłówek formularza", bar: 18, h: 0 },
      { title: "Szczegóły", bar: 18, h: 158, content: rows.map(([t, y, b]) => html`${p.label(t, 905, y, 1070, y + 23, 0)}${p.field(t, 1075, y, 1360, b, 1)}`) },
    ])}${hScroll(200)}`;
  }

  private subDaily() {
    const p = placer(886, 802);
    return html`${designer(459, [
      { title: "Nagłówek formularza", bar: 19, h: 78, pink: true, gridW: 389 },
      { title: "Szczegóły", bar: 18, h: 150, gridW: 389, content: html`
        ${p.label("Start", 908, 824, 1073, 847, 0)}${p.field("Start", 1078, 824, 1275, 847, 1)}
        ${p.label("End", 908, 851, 1073, 874, 0)}${p.field("End", 1078, 851, 1275, 874, 1)}
        ${p.label("HoursWorked", 908, 877, 1073, 900, 0)}${p.field("Hours", 1078, 877, 1118, 900, 1)}
        ${p.label("WeekNo", 911, 907, 954, 929, 0)}${p.field("WeekNo", 953, 907, 1067, 929, 1)}` },
    ])}${hScroll(296)}`;
  }

  private details() {
    const p = placer(323, 353);
    const ghost = (y: number, h: number) => html`<svg class="ghost" style=${p.at(662, y, 768, y + h)} viewBox="0 0 106 ${h}"><rect width="106" height=${h} fill="#fff"/><rect x="0.500" y="0.500" width="104" height=${h - 1} fill="none" stroke="#ddc48e" stroke-dasharray="2 6"/></svg>`;
    return html`
      ${p.label("ID_Worker", 345, 375, 451, 399, 3, 10.5)}${p.combo("ID_Worker", 455, 375, 659, 400, 4, 11.5)}${ghost(375, 24)}
      ${p.label("CompanyName", 345, 411, 451, 432, 0)}${p.combo("CompanyName", 455, 411, 659, 433, 1)}${ghost(411, 21)}
      ${p.label("Start", 345, 444, 451, 468, 3, 10.5)}${p.field("Start", 455, 444, 659, 469, 4, 11.5)}${p.field("Start", 662, 444, 768, 469, 4, 11.5)}
      ${p.label("End", 345, 480, 451, 504, 3, 10.5)}${p.field("End", 455, 480, 659, 505, 4, 11.5)}${p.field("End", 662, 480, 768, 505, 4, 11.5)}
      ${p.button(html`<svg width="9" height="13"><path d="M8.500 0.500v12L0.500 6.500z" fill="#3f78b9"/></svg>`, 669, 552, 709, 591)}
      ${p.button(html`<svg width="9" height="13"><path d="M0.500 0.500v12l8-6z" fill="#3f78b9"/></svg>`, 718, 552, 758, 591)}
      ${p.button("Dodaj rekord", 371, 601, 463, 629)}${p.button("Zapisz rekord", 477, 601, 571, 629)}
      ${p.button("Ostatni rekord", 590, 601, 691, 629)}${p.button("Pierwszy rekord", 711, 601, 822, 629)}
      ${p.button("Cofnij rekord", 587, 646, 680, 674)}
      ${p.label("HoursWorked Weekly podformularz", 855, 363, 1083, 385, 0)}
      <div class="sub one" style=${p.at(859, 389, 1344, 624)}>${this.subWeekly()}</div>
      ${p.label("HoursWorked Daily to Form podformularz", 862, 647, 1141, 669, 0)}
      <div class="sub two" style=${p.at(862, 663, 1344, 970)}>${this.subDaily()}</div>`;
  }

  private docArea() {
    return html`<div class="docarea">
      <div class="dtabs">
        <svg class="tabshape" width="1060" height="25" viewBox="0 0 1060 25"><path d="M0 24V5Q0 1 4 1H106q6 0 9 5l7 14q2 4 6 4z" fill="#fff"/><path d="M0.500 23V5Q0 1.500 4 1.500H106q6 0 9 5l6 13q2 4 6 4H1060" fill="none" stroke="#8f8f8f"/><path d="M4 1.500H106" stroke="#c9a284"/></svg>
        <div class="dtab">${formIcon()}<span>TimeTableInput</span></div>
        <svg style="position:relative" width="10" height="10" viewBox="0 0 10 10"><path d="M1 1l8 8M9 1L1 9" stroke="#444" stroke-width="1.500"/></svg>
      </div>
      <div class="body">
        <div class="mainform">${designer(1022, [
          { title: "Nagłówek formularza", bar: 19, h: 112, pink: true, content: this.header() },
          { title: "Szczegóły", bar: 18, h: 616, content: this.details() },
        ], true)}</div>
        <div class="vscroll">${arrowBtn("u")}<div class="thumb"></div><div class="grow"></div>${arrowBtn("d")}</div>
        ${hScroll(535)}
        <div class="size"></div>
      </div>
    </div>`;
  }

  private side() {
    return html`<div class="side"><div class="panel">
      <div class="px"><svg width="10" height="10" viewBox="0 0 10 10"><path d="M1 1l8 8M9 1L1 9" stroke="#666" stroke-width="2"/></svg></div>
      <div class="ptitle">Lista pól</div>
      <div class="plink">${icon(14, 15, svg`${box(0.5, 0.5, 11, 14)}<path d="M2 3.500h1M2 6.500h1M2 9.500h1M2 12h1M4.500 3.500h5M4.500 6.500h5M4.500 9.500h5M4.500 12h5" stroke="#888"/><path d="M8 5h6M11 2v6" stroke="#5fa587" stroke-width="2"/>`)}<span>Pokaż wszystkie tabele</span></div>
      <div class="pcap">Pola dostępne w tym widoku:</div>
      ${FIELDS.map((f) => html`<div class="pf">${f}</div>`)}
    </div></div>`;
  }

  private taskbar() {
    return html`
    <div class="status"><span>Widok projektu.</span><span class="grow"></span><span class="nl">Num Lock</span>
      <svg width="14" height="13" viewBox="0 0 14 13">${box(0.5, 0.5, 13, 12, "#f3f3f3")}<rect width="14" height="4" fill=${G}/><path d="M2 6.500h4M2 9.500h4M8 6.500h4M8 9.500h4" stroke=${G} stroke-width="1.500"/></svg>
      <svg class="v2" width="13" height="13" viewBox="0 0 13 13"><path d="M0 0.500h12M0 12.500h12M1.500 0v13M10.500 0v13M4 3.500h5M3 6.500h6M4 9.500h5" stroke=${G} stroke-width="1.200"/></svg>
      <div class="cur"><svg width="14" height="14" viewBox="0 0 14 14"><path d="M0.500 1v7h5zM6.500 7L13 1M1 10.500h12v3H1zM4 11v2M7 11v2M10 11v2" fill="none" stroke=${G} stroke-width="1.300"/></svg></div>
    </div>
    <div class="taskbar">
      <div class="tk first"><svg width="16" height="16" viewBox="0 0 16 16"><path d="M0 2.300L6.500 1.400v6.100H0zM7.500 1.300L16 0v7.500H7.500zM0 8.500h6.500v6.100L0 13.700zM7.500 8.500H16V16l-8.500-1.200z" fill="#fff"/></svg></div>
      <div class="tk"><svg width="17" height="17" viewBox="0 0 17 17"><circle cx="10.500" cy="6" r="5.300" fill="none" stroke="#fff" stroke-width="1.400"/><path d="M6.800 10L1 16.300" stroke="#fff" stroke-width="1.500"/></svg></div>
      <div class="tk run" style="margin-left:6px"><svg width="22" height="19" viewBox="0 0 22 19"><path d="M0 1h9l1.500 2H22v15H0z" fill="#ffe494"/><path d="M0 1h8l1 2H0z" fill="#f5b92e"/><path d="M4 18v-7q0-1.500 1.500-1.500h11q1.500 0 1.500 1.500v7h-4v-4H8v4z" fill="#3aa9e6"/></svg></div>
      <div class="tk run"><svg width="22" height="22" viewBox="0 0 22 22"><path d="M1 10C2 3 7 0.500 11.500 0.500 18 0.500 21 5.500 21 10v3H7.500c.5 5 7.500 6 12 3v4.200C12 24 3 21 3 13.500 3 9 6 6.700 8.500 6 7.300 7.200 7 8.500 7 9.500h7.500C14.500 6 12 4.800 9.500 4.800 5.500 4.800 2.500 7.500 1 10z" fill="#0b7fe0"/></svg></div>
      <div class="tk run"><svg width="20" height="24" viewBox="0 0 20 24"><path d="M1 2q9-3 18 0v16l-9 5.500L1 18z" fill="#173c3c" stroke="#b9c0b6" stroke-width="1.200"/><path d="M10 5v15M6.500 8h7M4.500 13c0 4 3 6 5.500 6s5.500-2 5.500-6" fill="none" stroke="#e8eadf" stroke-width="1.800"/><circle cx="10" cy="4.500" r="1.500" fill="none" stroke="#e8eadf"/></svg></div>
      <div class="tk run"><svg width="22" height="22" viewBox="0 0 22 22"><circle cx="11" cy="11" r="10.800" fill="#2f9e4c"/><path d="M1.700 5.500A10.800 10.800 0 0 1 20.400 5.700H11L6.500 13.500z" fill="#dd4b3e"/><path d="M20.400 5.700A10.800 10.800 0 0 1 10.500 21.800L15.500 13.500 11 5.700z" fill="#ffce43"/><circle cx="11" cy="11" r="5.200" fill="#fff"/><circle cx="11" cy="11" r="4.100" fill="#4688f1"/></svg></div>
      <div class="tk act"><svg width="23" height="22" viewBox="0 0 23 22"><path d="M13 3h6q3 0 3 2v12q0 2-3 2h-6z" fill="#fff"/><path d="M13 7q5 2 10 0M13 11q5 2 10 0M13 15q5 2 10 0" fill="none" stroke="#a4373a" stroke-width="1.500"/><path d="M0 2.500L13 0v22L0 19.500z" fill="#a4373a"/><text x="2.500" y="15.500" font-size="12.500" font-weight="700" fill="#fff">A</text></svg></div>
      <div class="tk run"><svg width="23" height="22" viewBox="0 0 23 22"><path d="M12 5h10v12H12z" fill="#fff"/><path d="M13 8l4 4 6-6" fill="none" stroke="#0072c6" stroke-width="1.500"/><path d="M0 2.500L13 0v22L0 19.500z" fill="#0072c6"/><text x="1.500" y="15.500" font-size="12.500" font-weight="700" fill="#fff">O</text></svg></div>
      <div class="tray">
        <svg width="16" height="17" viewBox="0 0 16 17"><g fill="none" stroke="#fff" stroke-width="1.200"><circle cx="10" cy="3.500" r="2.700"/><path d="M7.500 9c1-3.500 5.500-3.500 6.500 1"/><circle cx="4.500" cy="8.500" r="2.500"/><path d="M0.800 16c.5-6 7-6 7.500 0"/></g></svg>
        <svg width="13" height="8" viewBox="0 0 13 8" style="margin-left:21px"><path d="M1 7l5.500-5.500L12 7" fill="none" stroke="#fff" stroke-width="1.300"/></svg>
        <svg width="14" height="13" viewBox="0 0 14 13" style="margin-left:11px"><path d="M4 0l3 2.200L3.300 4.500 0 2.200zM10 0l4 2.200-3.300 2.300L7 2.200zM0 6.800l3.300-2.300L7 6.800 4 9zM14 6.800l-3.300-2.300L7 6.800 10 9zM7 7.800l3 2.200-3 2.500L4 10z" fill="#fff"/></svg>
        <svg width="17" height="11" viewBox="0 0 17 11" style="margin-left:8px"><path d="M2.500 9.500C-1 9 0 5 3 5 3 1 9-1.500 11 2c3-.5 4 1 4 2.500 3 1 2 6-1 6H6C4 10 4 6 7 6" fill="#fff"/></svg>
        <svg width="17" height="13" viewBox="0 0 17 13" style="margin-left:7px"><path d="M0.600 4.500H3L6.500 1v11L3 8.500H.6zM8.500 4.500q1.500 2 0 4M11 3q3 3.500 0 7M13.500 1q4.500 5.500 0 11" fill="none" stroke="#fff" stroke-width="1.100"/></svg>
        <span class="pol">POL</span>
        <div class="clock">23:01<br>02.05.2018</div>
        <svg class="note" width="26" height="26" viewBox="0 0 26 26"><path d="M0 0h16v13H6l-4 3v-3H0z" fill="#fff"/><path d="M3 4h10M3 7h10M3 10h6" stroke="#111" stroke-width="1.200"/><circle cx="15.500" cy="16" r="8.700" fill="#3a3a3a" stroke="#8a8a8a"/><text x="15.500" y="20" font-size="11" font-weight="600" text-anchor="middle" fill="#fff">21</text></svg>
        <div class="desk"></div>
      </div>
    </div>`;
  }

  render() {
    return html`${this.top()}${this.ribbon()}
      <div class="work">${this.nav()}${this.docArea()}${this.side()}</div>
      ${this.taskbar()}`;
  }
}
